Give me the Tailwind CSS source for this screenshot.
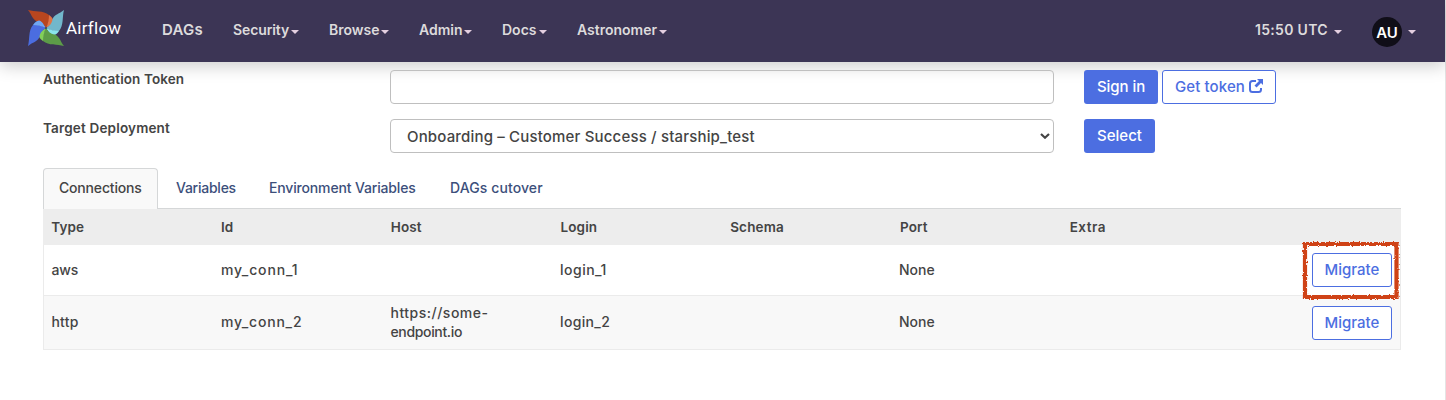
<!DOCTYPE html>
<html lang="en">
<head>
<meta charset="utf-8">
<title>Airflow</title>
<script src="https://cdn.jsdelivr.net/npm/@tailwindcss/browser@4"></script>
</head>
<body class="h-[400px] w-[1446px] overflow-hidden bg-white font-['Inter','Liberation_Sans',sans-serif] text-sm text-[#444]">
<div class="flex h-[400px] w-[1446px] flex-col border-r border-[#e4e4e4]">
  <nav class="flex h-[62px] shrink-0 pl-7 text-[15px] font-semibold leading-[60px] text-[#dddbdc] bg-[#3c3555] shadow-[0_4px_16px_rgba(0,0,0,0.2)]">
    <a class="flex w-[134px]">
      <svg class="mt-[10px] h-9 w-9 shrink-0" viewBox="0 0 36 36">
        <g><path fill="#b8461f" d="M0 0C7 2 15 0 21 5C22 9 20 14 18 18C16 15 14 12 9 11.500C4 9 4 5 0 0Z"/><path fill="#e07345" d="M21 5C24 7 25 9 25.500 11C25 14 21 16 18 18C20 14 21 9 21 5Z"/></g>
        <g transform="rotate(90 18 18)"><path fill="#72b7cb" d="M0 0C7 2 15 0 21 5C22 9 20 14 18 18C16 15 14 12 9 11.500C4 9 4 5 0 0Z"/><path fill="#8be3eb" d="M21 5C24 7 25 9 25.500 11C25 14 21 16 18 18C20 14 21 9 21 5Z"/></g>
        <g transform="rotate(180 18 18)"><path fill="#5c9c48" d="M0 0C7 2 15 0 21 5C22 9 20 14 18 18C16 15 14 12 9 11.500C4 9 4 5 0 0Z"/><path fill="#82cf58" d="M21 5C24 7 25 9 25.500 11C25 14 21 16 18 18C20 14 21 9 21 5Z"/></g>
        <g transform="rotate(270 18 18)"><path fill="#4b6de0" d="M0 0C7 2 15 0 21 5C22 9 20 14 18 18C16 15 14 12 9 11.500C4 9 4 5 0 0Z"/><path fill="#70a7f3" d="M21 5C24 7 25 9 25.500 11C25 14 21 16 18 18C20 14 21 9 21 5Z"/></g>
        <circle cx="18" cy="18" r="1" fill="#454052"/>
      </svg>
      <span class="ml-[2px] mt-[-2px] font-['Roboto','Liberation_Sans',sans-serif] text-[17px] font-normal tracking-[0.25px] text-white">Airflow</span>
    </a>
    <a class="w-[71px] tracking-[0.2px]">DAGs</a>
    <a class="flex w-24 items-center text-sm tracking-[-0.1px]"><span class="mt-[-2px] w-[58px]">Security</span><i class="mt-0.5 border-x-4 border-t-4 border-x-transparent border-t-[#e4cfe0]"></i></a>
    <a class="flex w-[90px] items-center text-sm"><span class="mt-[-2px] w-[52px]">Browse</span><i class="mt-0.5 border-x-4 border-t-4 border-x-transparent border-t-[#e4cfe0]"></i></a>
    <a class="flex w-[83px] items-center text-sm"><span class="mt-[-2px] w-[45px]">Admin</span><i class="mt-0.5 border-x-4 border-t-4 border-x-transparent border-t-[#e4cfe0]"></i></a>
    <a class="flex w-[75px] items-center text-sm"><span class="mt-[-2px] w-[37px]">Docs</span><i class="mt-0.5 border-x-4 border-t-4 border-x-transparent border-t-[#e4cfe0]"></i></a>
    <a class="flex items-center text-sm"><span class="mt-[-2px] w-[82px]">Astronomer</span><i class="mt-0.5 border-x-4 border-t-4 border-x-transparent border-t-[#e4cfe0]"></i></a>
    <div class="ml-auto flex pr-[29px]">
      <a class="flex w-[117px] items-center"><span class="mt-[-2px] w-[79px] text-sm tracking-[0.3px]">15:50 UTC</span><i class="mt-0.5 border-x-4 border-t-4 border-x-transparent border-t-[#e4cfe0]"></i></a>
      <a class="flex items-center"><span class="mt-[2px] mr-[6px] h-[30px] w-[30px] rounded-full bg-[#100e18] text-center text-[15px] leading-[31px] text-white">AU</span><i class="mt-0.5 border-x-4 border-t-4 border-x-transparent border-t-[#e4cfe0]"></i></a>
    </div>
  </nav>

  <main class="flex w-[1401px] flex-col pl-[43px] pt-2">
    <div class="flex h-[49px]">
      <label class="w-[347px] text-[13.5px] font-semibold leading-[18px] tracking-[0.09px]">Authentication Token</label>
      <input class="mr-[30px] h-[34px] w-[664px] rounded border border-[#bfbfbf]" type="text" aria-label="Authentication Token">
      <button class="mr-1 h-[34px] w-[74px] rounded-[3px] bg-[#4c6ee1] text-[15px] font-medium tracking-[-0.05px] text-white">Sign in</button>
      <button class="flex h-[34px] w-[114px] items-center rounded-[3px] border border-[#4c6ee1] bg-white pl-3 text-[15px] font-medium text-[#4c6ee1]"><span class="w-[74px] text-left tracking-[0.1px]">Get token</span>
        <svg class="mb-[2px] h-[14px] w-[14px] shrink-0" viewBox="0 0 14 14"><path d="M7 2H3.500Q1 2 1 4.500V10.500Q1 13 3.500 13H9.500Q12 13 12 10.500V9" fill="none" stroke="#4c6ee1" stroke-width="2"/><path d="M8 0H14V6L12 4L7.500 8.500L5.500 6.500L10 2Z" fill="#4c6ee1"/></svg>
      </button>
    </div>
    <div class="flex h-[49px]">
      <label class="w-[347px] text-[13.5px] font-semibold leading-[18px] tracking-[0.17px]">Target Deployment</label>
      <div class="mr-[30px] flex h-[34px] w-[664px] items-center justify-between rounded border border-[#bfbfbf] pl-4 pr-[3px] text-[15px] font-medium"><span class="mt-0.5 tracking-[0.17px]">Onboarding – Customer Success / starship_test</span>
        <svg class="h-[6px] w-[10px]" viewBox="0 0 10 6"><path d="M1 1L5 4.700L9 1" fill="none" stroke="#444" stroke-width="2.200"/></svg>
      </div>
      <button class="h-[34px] w-[71px] rounded-[3px] bg-[#4c6ee1] text-[15px] font-medium text-white">Select</button>
    </div>

    <div class="flex h-[41px] border-b border-[#d5d7d8] text-sm leading-[39px] text-[#3c4f7b]">
      <a class="h-[41px] w-[115px] shrink-0 rounded-t border border-b-0 border-[#d5d7d8] bg-[#f9f9f9] pl-[15px] font-medium leading-[38px] tracking-[-0.18px] text-[#444]">Connections</a>
      <a class="ml-[18px] w-[93px] font-medium tracking-[-0.25px]">Variables</a>
      <a class="w-[181px] font-medium tracking-[-0.16px]">Environment Variables</a>
      <a class="font-medium tracking-[0.1px]">DAGs cutover</a>
    </div>

    <div class="grid h-9 grid-cols-8 bg-[#ededed] text-[13.5px] font-semibold leading-9 tracking-[0.15px] *:pl-[8.2px]">
      <div>Type</div><div>Id</div><div>Host</div><div>Login</div><div>Schema</div><div>Port</div><div class="tracking-[0.5px]">Extra</div><div></div>
    </div>
    <div class="grid h-[51px] grid-cols-8 items-center border border-t-0 border-[#ebebeb] bg-white text-sm font-medium *:pl-[7.5px]">
      <div class="tracking-[-0.2px]">aws</div><div class="tracking-[0.85px]">my_conn_1</div><div></div><div class="tracking-[0.5px]">login_1</div><div></div><div>None</div><div></div>
      <div class="relative flex justify-end pr-2">
        <button class="h-[34px] w-20 rounded-[3px] border border-[#4c6ee1] bg-white text-[15px] text-[#4c6ee1]">Migrate</button>
        <svg class="absolute -right-[1px] -top-[15px] h-[64px] w-[102px]" viewBox="0 0 102 64">
          <filter id="rough" x="-5%" y="-5%" width="110%" height="110%"><feTurbulence type="fractalNoise" baseFrequency="0.7" numOctaves="2" seed="4" result="n"/><feDisplacementMap in="SourceGraphic" in2="n" scale="3" xChannelSelector="R" yChannelSelector="G"/></filter>
          <path d="M6 6H97.500V59H6Z" fill="none" stroke="#cf4218" stroke-width="4.200" filter="url(#rough)"/>
        </svg>
      </div>
    </div>
    <div class="grid h-[54px] grid-cols-8 items-center border border-t-0 border-[#ebebeb] bg-[#f8f8f8] text-sm font-medium *:pl-[7.5px]">
      <div class="-mt-0.5 tracking-[0.2px]">http</div><div class="-mt-0.5 tracking-[0.8px]">my_conn_2</div><div class="-mt-0.5 leading-[19px] tracking-[0.5px]">https://some-<br><span class="tracking-[-0.35px]">endpoint.io</span></div><div class="-mt-0.5 tracking-[0.35px]">login_2</div><div></div><div class="-mt-0.5">None</div><div></div>
      <div class="flex justify-end pr-2"><button class="h-[34px] w-20 rounded-[3px] border border-[#4c6ee1] bg-white text-[15px] text-[#4c6ee1]">Migrate</button></div>
    </div>
  </main>
</div>
</body>
</html>
